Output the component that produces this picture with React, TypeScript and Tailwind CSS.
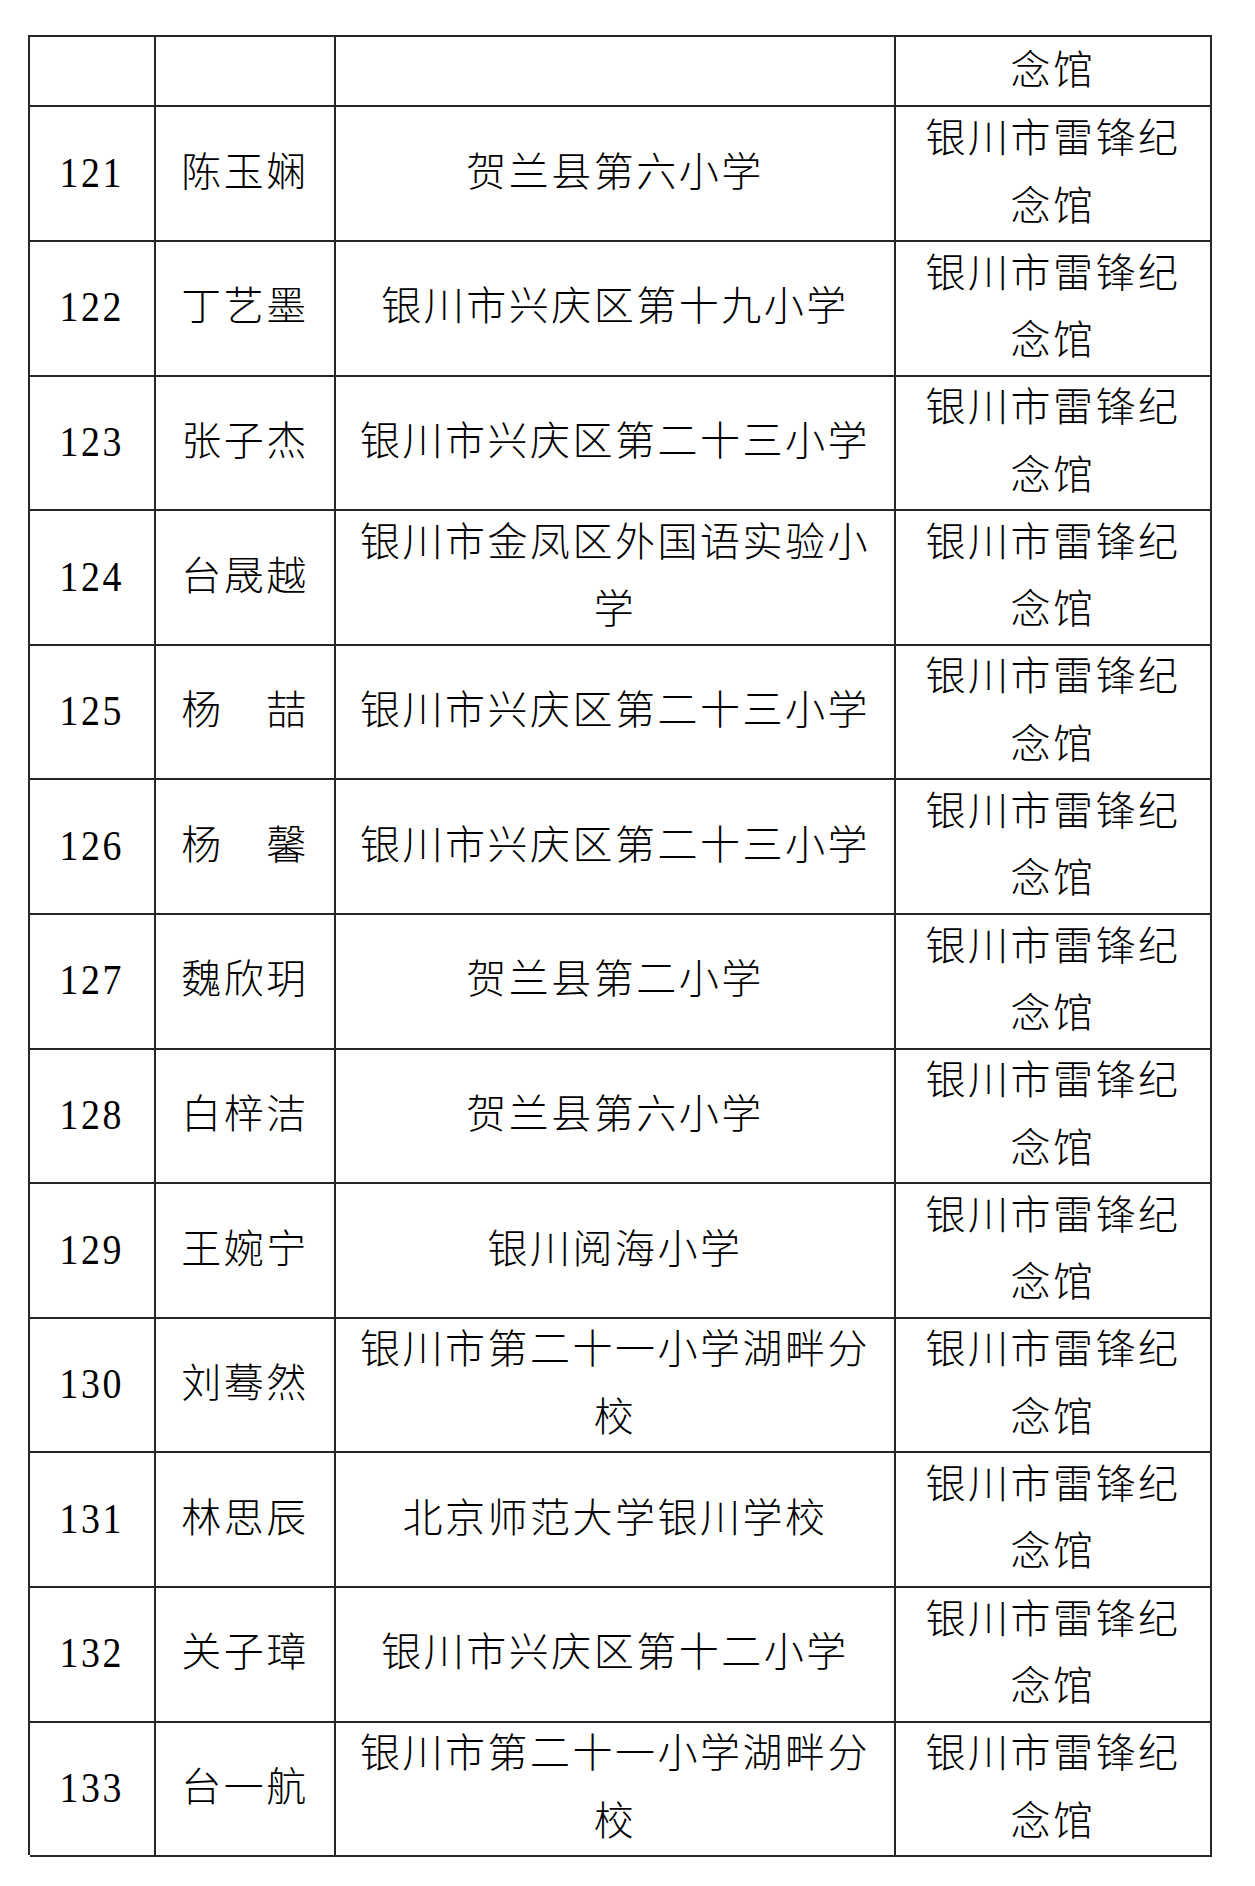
import React from "react";

const rows: [string, string, string][] = [
  ["121", "陈玉娴", "贺兰县第六小学"],
  ["122", "丁艺墨", "银川市兴庆区第十九小学"],
  ["123", "张子杰", "银川市兴庆区第二十三小学"],
  ["124", "台晟越", "银川市金凤区外国语实验小学"],
  ["125", "杨\u3000喆", "银川市兴庆区第二十三小学"],
  ["126", "杨\u3000馨", "银川市兴庆区第二十三小学"],
  ["127", "魏欣玥", "贺兰县第二小学"],
  ["128", "白梓洁", "贺兰县第六小学"],
  ["129", "王婉宁", "银川阅海小学"],
  ["130", "刘蓦然", "银川市第二十一小学湖畔分校"],
  ["131", "林思辰", "北京师范大学银川学校"],
  ["132", "关子璋", "银川市兴庆区第十二小学"],
  ["133", "台一航", "银川市第二十一小学湖畔分校"],
];

const cell =
  "flex items-center justify-center text-center border-r-2 border-b-2 border-[#262626] leading-[67.5px]";

export default function App() {
  return (
    <div
      className="bg-white min-h-[1886px] w-[1255px] pt-[35px] pl-[28px] text-black text-[40px] tracking-[2.5px] font-light"
      style={{ fontFamily: '"Liberation Serif", "Noto Sans CJK SC", serif' }}
    >
      <div className="w-[1184px] border-t-2 border-l-2 border-[#262626] flex flex-col">
        <div className="grid grid-cols-[126px_180px_560px_316px] h-[68px]">
          <div className={cell}></div>
          <div className={cell}></div>
          <div className={cell}></div>
          <div className={`${cell} px-[20px]`}>念馆</div>
        </div>
        {rows.map(([n, name, school]) => (
          <div key={n} className="grid grid-cols-[126px_180px_560px_316px] h-[134.6px]">
            <div className={cell}>
              <span className="inline-block text-[43px] tracking-[3px] scale-x-[0.88]">{n}</span>
            </div>
            <div className={cell}>{name}</div>
            <div className={`${cell} px-[10px]`}>{school}</div>
            <div className={`${cell} px-[20px]`}>银川市雷锋纪念馆</div>
          </div>
        ))}
      </div>
    </div>
  );
}
